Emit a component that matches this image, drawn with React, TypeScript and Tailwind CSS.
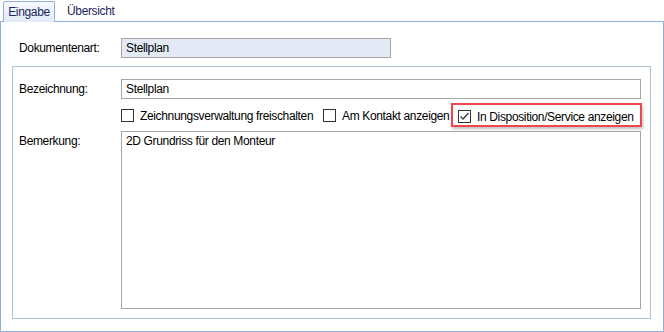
import React from "react";

function Box({ checked }: { checked?: boolean }) {
  return (
    <span className="w-[13px] h-[13px] border border-[#333333] bg-white flex items-center justify-center shrink-0">
      {checked && (
        <svg width="11" height="11" viewBox="0 0 11 11">
          <path d="M1.5 5.5 L4 8 L9.5 2" fill="none" stroke="#404040" strokeWidth="1.4" />
        </svg>
      )}
    </span>
  );
}

export default function App() {
  return (
    <div className="w-[664px] h-[332px] bg-white flex flex-col text-[12px] tracking-[-0.35px] text-black font-['Liberation_Sans',Arial,sans-serif] leading-none">
      <div className="h-[21px] pt-[1px] flex items-end pl-[3px] shrink-0">
        <div className="relative z-10 -mb-px w-[52px] h-[21px] border border-b-0 border-[#8fb0de] rounded-t-[2px] bg-gradient-to-b from-[#f6f9fd] to-[#e1ebf7] flex items-center justify-center text-[#1c2660]">
          Eingabe
        </div>
        <div className="h-[20px] flex items-center pl-[12px] text-[#1c2660]">Übersicht</div>
      </div>
      <div className="flex-1 border border-[#93aedc] flex flex-col">
        <div className="mt-[16px] flex items-center">
          <span className="ml-[18px] w-[102px]">Dokumentenart:</span>
          <div className="w-[270px] h-[20px] border border-[#a6a6a6] bg-[#e3eaf6] pl-[4px] flex items-center">Stellplan</div>
        </div>
        <div className="mt-[8px] ml-[11px] w-[639px] h-[253px] border border-[#adc3d7] flex flex-col pt-[12px]">
          <div className="flex items-center">
            <span className="ml-[6px] w-[102px]">Bezeichnung:</span>
            <div className="w-[520px] h-[20px] border border-[#a6a6a6] bg-white pl-[4px] flex items-center">Stellplan</div>
          </div>
          <div className="mt-[4px] h-[24px] flex items-center pl-[108px]">
            <div className="w-[202px] flex items-center pt-[1px]">
              <Box />
              <span className="ml-[6px] whitespace-nowrap">Zeichnungsverwaltung freischalten</span>
            </div>
            <div className="w-[128px] flex items-center pt-[1px]">
              <Box />
              <span className="ml-[6px] whitespace-nowrap">Am Kontakt anzeigen</span>
            </div>
            <div className="w-[191px] h-[24px] border-2 border-[#f0464d] shadow-[1px_2px_3px_rgba(0,0,0,0.25)] flex items-center pl-[5px] pt-[3px]">
              <Box checked />
              <span className="ml-[6px] whitespace-nowrap">In Disposition/Service anzeigen</span>
            </div>
          </div>
          <div className="mt-[4px] flex items-start">
            <span className="ml-[6px] w-[102px] mt-[4px]">Bemerkung:</span>
            <div className="w-[520px] h-[178px] border border-[#a6a6a6] bg-white pl-[4px] pt-[3px]">2D Grundriss für den Monteur</div>
          </div>
        </div>
      </div>
    </div>
  );
}
